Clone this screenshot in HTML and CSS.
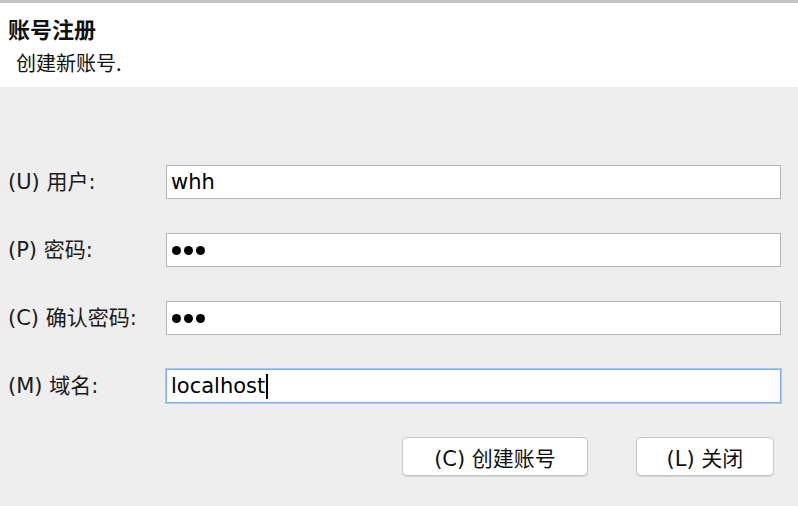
FILE: index.html
```html
<!DOCTYPE html>
<html lang="zh-CN">
<head>
<meta charset="utf-8">
<title>账号注册</title>
<link rel="stylesheet" href="styles.css">
</head>
<body>
<div class="window">
  <div class="topline"></div>
  <header class="header">
    <div class="title">账号注册</div>
    <div class="subtitle">创建新账号.</div>
  </header>
  <main class="content">
    <div class="form">
      <label class="label">(U) 用户:</label>
      <div class="field"><span class="value">whh</span></div>
      <label class="label">(P) 密码:</label>
      <div class="field"><span class="dots"><i></i><i></i><i></i></span></div>
      <label class="label">(C) 确认密码:</label>
      <div class="field"><span class="dots"><i></i><i></i><i></i></span></div>
      <label class="label">(M) 域名:</label>
      <div class="field focus"><span class="value">localhost</span><span class="caret"></span></div>
    </div>
    <div class="buttons">
      <button class="btn btn-create">(C) 创建账号</button>
      <button class="btn btn-close">(L) 关闭</button>
    </div>
  </main>
</div>
</body>
</html>
```
FILE: styles.css
```css
html, body {
  margin: 0;
  padding: 0;
  background: #eeeeee;
}
body {
  font-family: "DejaVu Sans", "Noto Sans CJK SC", sans-serif;
  color: #111111;
  width: 798px;
  height: 506px;
  overflow: hidden;
}
.window {
  display: flex;
  flex-direction: column;
  height: 506px;
}
.topline {
  height: 3px;
  background: #c4c4c4;
}
.header {
  background: #ffffff;
  height: 84px;
  box-sizing: border-box;
  padding: 11px 0 0 8px;
}
.title {
  font-size: 22px;
  font-weight: bold;
  line-height: 28px;
  font-family: "Noto Sans CJK SC", sans-serif;
}
.subtitle {
  font-size: 20px;
  line-height: 26px;
  margin-top: 8px;
  padding-left: 8px;
  font-family: "Noto Sans CJK SC", sans-serif;
}
.content {
  background: #eeeeee;
  flex: 1;
  padding: 78px 17px 0 8px;
}
.form {
  display: grid;
  grid-template-columns: 158px 1fr;
  grid-auto-rows: 34px;
  row-gap: 34px;
  align-items: center;
}
.label {
  font-size: 21px;
  line-height: 34px;
  color: #1a1a1a;
}
.field {
  height: 34px;
  box-sizing: border-box;
  background: #ffffff;
  border: 1px solid #b6b6b6;
  display: flex;
  align-items: center;
  padding-left: 4px;
}
.field.focus {
  border-color: #7eafe8;
  box-shadow: 0 0 0 1px #a9c9f0;
}
.value {
  font-size: 21px;
  color: #000000;
}
.caret {
  width: 2px;
  height: 25px;
  background: #000000;
  margin-left: 1px;
}
.dots {
  display: flex;
  gap: 3px;
  padding-left: 1px;
}
.dots i {
  display: block;
  width: 9px;
  height: 9px;
  border-radius: 50%;
  background: #000000;
}
.buttons {
  display: flex;
  justify-content: flex-end;
  gap: 48px;
  margin-top: 34px;
  padding-right: 7px;
}
.btn {
  height: 39px;
  background: #ffffff;
  border: 1px solid #c8c8c8;
  border-radius: 5px;
  box-shadow: 0 1px 1px rgba(0, 0, 0, 0.12);
  font-family: "DejaVu Sans", "Noto Sans CJK SC", sans-serif;
  font-size: 21px;
  color: #111111;
  padding: 0;
}
.btn-create {
  width: 186px;
}
.btn-close {
  width: 138px;
}
```
